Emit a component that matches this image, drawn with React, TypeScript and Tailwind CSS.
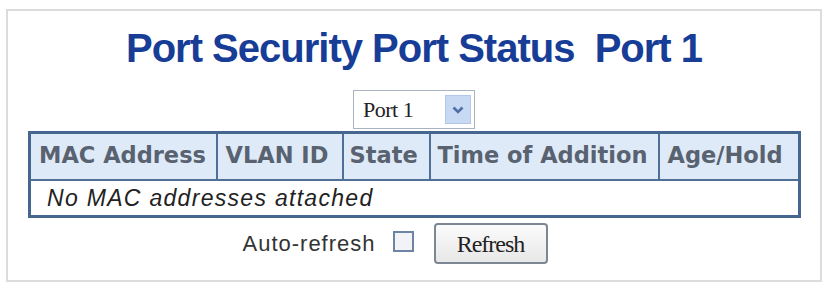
export default function App() {
  return (
    <div className="w-[824px] h-[284px] bg-white pt-[9px] pl-[6px] pr-[2px]">
      <div className="h-[273px] border-2 border-[#dcdcdc] flex flex-col items-center">
        <h1 className="mt-[13px] h-[48px] text-[40px] leading-[48px] font-bold text-[#173d97] font-['Liberation_Sans',Arial,sans-serif] tracking-[-1px] whitespace-pre">
          Port Security Port Status  Port 1
        </h1>
        <div className="mt-[18px] flex items-center h-[39px] w-[122px] border border-[#a9b3c0] bg-white pl-[9px] pr-[3px]">
          <span className="flex-1 text-[22px] text-[#222] font-['Liberation_Serif',serif] tracking-[-0.5px]">Port 1</span>
          <span className="w-[26px] h-[29px] bg-[#c8daf3] border border-[#b3c8e6] flex items-center justify-center">
            <svg width="12" height="8" viewBox="0 0 12 8">
              <path d="M1.5 1.5 L6 6 L10.5 1.5" fill="none" stroke="#4f6fa6" strokeWidth="2.6" />
            </svg>
          </span>
        </div>
        <table className="mt-[2px] ml-[1px] border-collapse border-[3px] border-[#45678f] font-['DejaVu_Sans',Verdana,sans-serif] whitespace-nowrap">
          <thead>
            <tr className="bg-[#dfeaf8] text-[#586270] text-[22.5px] h-[47px]">
              <th className="w-[187px] border-2 border-[#4f6f96] px-[8px] text-left font-bold">MAC Address</th>
              <th className="w-[126px] border-2 border-[#4f6f96] px-[8px] text-left font-bold">VLAN ID</th>
              <th className="w-[87px] border-2 border-[#4f6f96] px-[6px] text-left font-bold">State</th>
              <th className="w-[229px] border-2 border-[#4f6f96] px-[7px] text-left font-bold">Time of Addition</th>
              <th className="w-[141px] border-2 border-[#4f6f96] px-[8px] text-left font-bold">Age/Hold</th>
            </tr>
          </thead>
          <tbody>
            <tr className="h-[37px]">
              <td colSpan={5} className="px-[16px] text-[23px] italic text-[#222] font-['Liberation_Sans',Arial,sans-serif] tracking-[1.3px]">
                No MAC addresses attached
              </td>
            </tr>
          </tbody>
        </table>
        <div className="mt-[5px] mr-[38px] flex items-center">
          <span className="text-[22px] text-[#333] font-['Liberation_Sans',Arial,sans-serif] tracking-[1px]">Auto-refresh</span>
          <span className="ml-[17px] -mt-[4px] w-[21px] h-[21px] border-2 border-[#6d84a4] bg-[#f1f3f6]" />
          <button className="ml-[20px] w-[114px] h-[41px] rounded-[4px] border-2 border-[#7d8793] bg-gradient-to-b from-[#fbfbfb] to-[#e8e8e8] text-[24px] text-[#222] font-['Liberation_Serif',serif] tracking-[-1px]">
            Refresh
          </button>
        </div>
      </div>
    </div>
  )
}
